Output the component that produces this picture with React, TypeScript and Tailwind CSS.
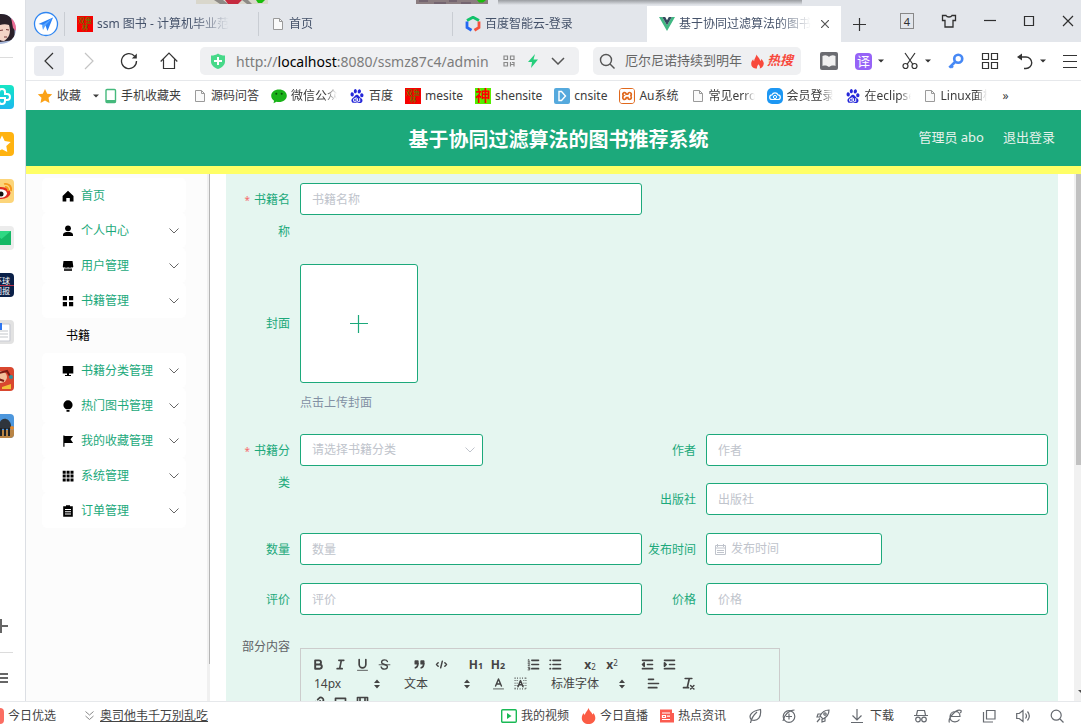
import React from "react";
import type { ReactNode } from "react";
import { SiBaidu, SiXampp } from "react-icons/si";

const FADE = "[mask-image:linear-gradient(to_right,black_75%,transparent)]";

function Svg({ box = "0 0 18 18", className = "size-[18px]", children }: { box?: string; className?: string; children: ReactNode }) {
  return (
    <svg viewBox={box} className={`shrink-0 ${className}`} fill="none" stroke="currentColor" strokeWidth="1.2" aria-hidden="true">
      {children}
    </svg>
  );
}

function Caret() {
  return (
    <Svg box="0 0 6 4" className="h-1 w-1.5">
      <path d="M0 0.5h6L3 3.5z" fill="currentColor" stroke="none" />
    </Svg>
  );
}

function PageIcon() {
  return (
    <Svg box="0 0 14 16" className="h-4 w-[14px] text-[#9a9a9a]">
      <path d="M2.500 2.500h6l3 3v8h-9z" fill="#fafafa" strokeWidth="1" />
      <path d="M8.500 2.500v3h3" strokeWidth="1" />
    </Svg>
  );
}

function FishIcon() {
  return (
    <span className="flex size-4 shrink-0 flex-col items-center justify-center bg-[#f80000] text-[7px] leading-[7px] text-[#4f8a00]">
      <span>双鱼</span>
      <span>林</span>
    </span>
  );
}

function WechatIcon() {
  return (
    <Svg box="0 0 16 16" className="size-4">
      <path d="M8 1.500c4.400 0 7.800 2.700 7.800 6.200S12.400 14 8 14c-.9 0-1.700-.1-2.500-.3L2.500 15.300l.6-2.600C1.300 11.500.2 9.700.2 7.700.2 4.200 3.600 1.500 8 1.500z" fill="#1ab31a" stroke="none" />
      <circle cx="5.300" cy="5.800" r="1" fill="#0a4d0a" stroke="none" />
      <circle cx="10.700" cy="5.800" r="1" fill="#0a4d0a" stroke="none" />
    </Svg>
  );
}

function Flame({ className }: { className: string }) {
  return (
    <Svg box="0 0 16 16" className={className}>
      <path
        d="M7 0.500c.6 2.500 3.800 4 3.900 7 .7-.5 1-1.300 1-2.300C14 7 15 9 14.600 11c-.4 2.300-2 4-4.300 4.500.7-1.500.2-3.100-1.500-4.500-.2 1.400-1.800 2.200-1.300 4.500H6C3 15 1.200 13 1.300 10.400c0-2 .9-3.200 2.100-4.700.1 1 .4 1.600 1 2C4.300 5 6.400 3.500 7 .5z"
        fill="currentColor"
        stroke="none"
      />
    </Svg>
  );
}

function VueIcon() {
  return (
    <Svg box="0 0 16 16" className="size-4">
      <path d="M0 1h3.200L8 9.300 12.800 1H16L8 15z" fill="#41b883" stroke="none" />
      <path d="M3.200 1h3L8 4.200 9.800 1h3L8 9.300z" fill="#35495e" stroke="none" />
    </Svg>
  );
}

function CloudLogo() {
  return (
    <Svg box="0 0 16 16" className="size-4">
      <path d="M2 4.500L8 1.200l6 3.300" stroke="#12c26b" strokeWidth="2.800" />
      <path d="M2 5.500v6l4.500 2.800" stroke="#2468f2" strokeWidth="2.800" />
      <path d="M14 5.500v6l-4.500 2.800" stroke="#f6513b" strokeWidth="2.800" />
    </Svg>
  );
}

/* ---------- left dock ---------- */

function DockTile({ className, children }: { className: string; children: ReactNode }) {
  return (
    <button type="button" className={`-ml-[10px] size-6 shrink-0 overflow-hidden rounded ${className}`}>
      {children}
    </button>
  );
}

function Dock() {
  return (
    <nav aria-label="快捷栏" className="flex w-[26px] shrink-0 flex-col overflow-hidden border-r border-[#dcdfe4] bg-white">
      <button type="button" aria-label="头像" className="mt-[14px] -ml-[14px] size-[30px] shrink-0 overflow-hidden rounded-full">
        <Svg box="0 0 30 30" className="size-[30px]">
          <rect width="30" height="30" fill="#a9b9da" stroke="none" />
          <path d="M4 0h17c6 5 9 13 7 26L6 29z" fill="#2a2029" stroke="none" />
          <path d="M25 3l5 4v10l-3-3z" fill="#ec6d95" stroke="none" />
          <path d="M9 14c3-3 9-5 14-3 2 6 1 12-5 16-6 0-9-6-9-13z" fill="#f3d3c6" stroke="none" />
          <path d="M14 16.500l3-.5M20 15.500l3 .5M18 23h3" stroke="#7a3b3b" />
        </Svg>
      </button>
      <div className="mt-[13px] h-px w-[13px] shrink-0 bg-[#dcdcdc]" />
      <div className="mt-[27px] flex flex-col gap-[23px]">
        <DockTile className="bg-gradient-to-b from-[#18e6c4] to-[#1fb8ee] text-white">
          <Svg box="0 0 24 24" className="size-6">
            <path d="M9 13V7a3 3 0 016 0v2h2a3 3 0 010 6h-3M10 13h5v3a3 3 0 01-6 0" strokeWidth="2" />
          </Svg>
        </DockTile>
        <DockTile className="bg-[#ffb310]">
          <Svg box="0 0 24 24" className="size-6">
            <path d="M12 3.500l2.700 5.500 6 .9-4.400 4.200 1 6-5.300-2.800-5.300 2.800 1-6L3.300 9.900l6-.9z" fill="#fff" stroke="none" />
          </Svg>
        </DockTile>
        <DockTile className="bg-[#fcd57a]">
          <Svg box="0 0 24 24" className="size-6">
            <ellipse cx="11" cy="14" rx="9.500" ry="6" fill="#e02b20" stroke="none" />
            <ellipse cx="10.500" cy="14.500" rx="6.500" ry="4.200" fill="#fff" stroke="none" />
            <circle cx="11" cy="15" r="2.500" fill="#111" stroke="none" />
            <path d="M14 5c4-1 8 2 7 7M15 8c2 0 3.500 1 3 4" stroke="#f59a1c" strokeWidth="1.800" />
          </Svg>
        </DockTile>
        <DockTile className="bg-[#ececec]">
          <Svg box="0 0 24 24" className="size-6">
            <rect x="2" y="5" width="19" height="14" fill="#16b866" stroke="none" />
            <path d="M2 5l9.500 8L21 5z" fill="#2fd884" stroke="none" />
          </Svg>
        </DockTile>
        <DockTile className="bg-[#0a2048] text-right text-[8px] leading-[9px] text-white">
          <span className="block pr-1">环球</span>
          <span className="block border-t border-[#b5314a] pr-1">国报</span>
        </DockTile>
        <DockTile className="bg-[#e2e2e2]">
          <Svg box="0 0 24 24" className="size-6">
            <rect x="4" y="4" width="16" height="17" rx="1" fill="#fff" stroke="#c9ccd3" />
            <path d="M8 11h10M8 14h10M8 17h10" stroke="#c4c7cc" />
            <rect x="4" y="3" width="8" height="7" fill="#2f76f0" stroke="none" />
          </Svg>
        </DockTile>
        <DockTile className="bg-[#d9472f]">
          <Svg box="0 0 24 24" className="size-6">
            <circle cx="11" cy="10" r="6" fill="#f3c09a" stroke="none" />
            <path d="M5 7l12-3 3 5M8 12l6 2" stroke="#7c1c14" strokeWidth="2" />
            <path d="M12 20l9-3v5h-9z" fill="#f2c037" stroke="none" />
            <circle cx="21" cy="10" r="2" fill="#2f8f9d" stroke="none" />
          </Svg>
        </DockTile>
        <DockTile className="bg-[#4d97dd]">
          <Svg box="0 0 24 24" className="size-6">
            <path d="M0 16h24v8H0z" fill="#b98445" stroke="none" />
            <path d="M9 12c0-9 10-10 12-1v4H9z" fill="#2f353c" stroke="none" />
            <path d="M11 14v8M15 14v8M19 14v8" stroke="#1e2226" strokeWidth="2" />
            <circle cx="22" cy="14" r="2" fill="#e88a2a" stroke="none" />
          </Svg>
        </DockTile>
      </div>
      <div className="mt-auto flex flex-col text-[#666]">
        <button type="button" aria-label="添加">
          <Svg box="0 0 8 14" className="h-[14px] w-2">
            <path d="M1 0v14M0 7h8" strokeWidth="2" />
          </Svg>
        </button>
        <div className="mt-[19px] mb-[20px] h-px w-[13px] bg-[#dcdcdc]" />
        <button type="button" aria-label="菜单" className="mb-[18px]">
          <Svg box="0 0 8 10" className="h-[10px] w-2">
            <path d="M0 1h8M0 5h8M0 9h8" strokeWidth="2" />
          </Svg>
        </button>
      </div>
    </nav>
  );
}

/* ---------- browser chrome ---------- */

function Tab({ icon, title, active, divided }: { icon: ReactNode; title: string; active?: boolean; divided?: boolean }) {
  return (
    <div className={`flex w-[194px] min-w-0 items-center ${active ? "bg-white" : ""}`}>
      <button type="button" className="flex h-full min-w-0 flex-1 items-center gap-1 pl-3 text-left">
        {icon}
        <span className={`w-[132px] min-w-0 overflow-hidden whitespace-nowrap ${FADE}`}>{title}</span>
      </button>
      {active && (
        <button type="button" aria-label="关闭标签" className="mr-3 text-[#555]">
          <Svg box="0 0 8 8" className="size-2">
            <path d="M0 0l8 8M8 0l-8 8" />
          </Svg>
        </button>
      )}
      {divided && <span className="h-6 w-px shrink-0 bg-[#c9cdd3]" />}
    </div>
  );
}

function TabStrip() {
  return (
    <div className="relative flex h-[42px] shrink-0 bg-[#e3e6eb] pt-1.5 text-xs text-[#45526a]">
      <div className="absolute top-0 left-[170px] h-1 w-[72px] bg-[#d9d7cc]">
        <Svg box="0 0 72 4" className="h-1 w-[72px]">
          <path d="M18 0l6 4h8l-5-4zM46 0h6l4 4h-5z" fill="#8d8a86" stroke="none" />
          <path d="M29 0h17l-4 4H32z" fill="#c52a3f" stroke="none" />
          <path d="M60 0h9l-3 3h-4z" fill="#19bd0b" stroke="none" />
        </Svg>
      </div>
      <div className="absolute top-0 left-[390px] h-1 w-[72px] bg-[#8b7d80]">
        <Svg box="0 0 72 4" className="h-1 w-[72px]">
          <path d="M3 1h9M18 3h12M33 1h8M45 3h10" stroke="#6d5d6b" strokeWidth="1.500" />
          <path d="M61 0h9l-3 2.500h-4z" fill="#19bd0b" stroke="none" />
        </Svg>
      </div>
      <div className="absolute top-0 left-[472px] h-[5px] w-[304px] bg-gradient-to-b from-[#9a9da1] to-[#e3e6eb]" />

      <button type="button" aria-label="浏览器" className="ml-1.5 flex w-7 shrink-0 items-center justify-center">
        <Svg box="0 0 26 26" className="size-[26px]">
          <circle cx="13" cy="13" r="11.500" fill="#fff" stroke="#2f86f2" strokeWidth="1.300" />
          <path d="M5.500 13L20 6.500 14.500 20 12.500 14.500z" fill="#2b82f6" stroke="none" />
          <path d="M20 6.500L9 14.500l1 4.500 2.500-4.500z" fill="#5ba6ff" stroke="none" />
        </Svg>
      </button>
      <span className="ml-1 h-6 w-px shrink-0 self-center bg-[#c9cdd3]" />
      <Tab icon={<FishIcon />} title="ssm 图书 - 计算机毕业范文" divided />
      <Tab icon={<PageIcon />} title="首页" divided />
      <Tab icon={<CloudLogo />} title="百度智能云-登录" />
      <Tab icon={<VueIcon />} title="基于协同过滤算法的图书推荐" active />
      <button type="button" aria-label="新标签" className="ml-2.5 flex w-4 shrink-0 items-center justify-center text-[#333]">
        <Svg box="0 0 14 14" className="size-[14px]">
          <path d="M7.500 1v13M1 7.500h13" />
        </Svg>
      </button>
      <div className="mr-[7px] ml-auto flex shrink-0 items-center gap-[27px] pb-1.5 text-[#2f2f2f]">
        <button type="button" className="flex h-4 w-[14px] items-center justify-center border border-[#888] text-[11px] leading-none">4</button>
        <button type="button" aria-label="皮肤">
          <Svg box="0 0 16 14" className="h-[14px] w-4">
            <path d="M5 1.500H1.500v5H4V13h8V6.500h2.500v-5H11C10 3.500 6 3.500 5 1.500z" strokeWidth="1.300" />
          </Svg>
        </button>
        <button type="button" aria-label="最小化">
          <Svg box="0 0 12 12" className="size-3">
            <path d="M0 5.500h12" />
          </Svg>
        </button>
        <button type="button" aria-label="最大化">
          <Svg box="0 0 12 12" className="size-3">
            <path d="M1.500 1.500h9v9h-9z" />
          </Svg>
        </button>
        <button type="button" aria-label="关闭">
          <Svg box="0 0 12 12" className="size-3">
            <path d="M1 1l10 10M11 1L1 11" />
          </Svg>
        </button>
      </div>
    </div>
  );
}

function AddressBar() {
  return (
    <div className="flex h-[39px] shrink-0 items-center border-b border-[#e6e8eb] bg-white pr-1 pl-2 text-[#333]">
      <div className="flex gap-2.5">
        <button type="button" aria-label="后退" className="flex size-[30px] items-center justify-center rounded-sm bg-[#e9ebf0]">
          <Svg><path d="M13 1L5 9l8 8" /></Svg>
        </button>
        <button type="button" aria-label="前进" className="flex size-[30px] items-center justify-center text-[#c4c4c4]">
          <Svg><path d="M5 1l8 8-8 8" /></Svg>
        </button>
        <button type="button" aria-label="刷新" className="flex size-[30px] items-center justify-center">
          <Svg>
            <path d="M16.500 9A7.500 7.500 0 1114.500 4" strokeWidth="1.300" />
            <path d="M16.800 1.500v5h-5z" fill="currentColor" stroke="none" />
          </Svg>
        </button>
        <button type="button" aria-label="主页" className="flex size-[30px] items-center justify-center">
          <Svg><path d="M.7 9.500L9 1.200 17.300 9.500M3.500 7.500v9h11v-9" strokeWidth="1.200" /></Svg>
        </button>
      </div>
      <div className="ml-4 flex h-7 min-w-0 flex-1 items-center rounded-[5px] bg-[#eff0f2] pr-[14px] pl-2.5">
        <Svg box="0 0 16 16" className="size-4">
          <path d="M1 2.500c3 0 5-.5 7-2 2 1.500 4 2 7 2v6c0 3.500-3 6-7 7.500-4-1.500-7-4-7-7.500z" fill="#47d989" stroke="none" />
          <path d="M8 4v8M4 8h8" stroke="#fff" strokeWidth="2" />
        </Svg>
        <span className="ml-2.5 min-w-0 flex-1 overflow-hidden text-[14px] whitespace-nowrap text-[#7c7c7c]">
          http://<span className="text-black">localhost</span>:8080/ssmz87c4/admin
        </span>
        <div className="ml-3 flex items-center gap-[13px]">
          <Svg box="0 0 12 12" className="size-3 text-[#8a8a8a]">
            <path d="M1 1h3.500v3.500H1zM7.500 1H11v3.500H7.500zM1 7.500h3.500V11H1zM7.500 7v4.500M11 7v4.500M9 7.500h2M8 9.500h3" />
          </Svg>
          <Svg box="0 0 10 14" className="h-[14px] w-2.5">
            <path d="M7 0L0 8h4L3 14l7-8.500H5.500z" fill="#25ce7b" stroke="none" />
          </Svg>
          <Svg box="0 0 14 8" className="h-2 w-[14px] text-[#555]">
            <path d="M1 1l6 6 6-6" strokeWidth="1.500" />
          </Svg>
        </div>
      </div>
      <label className="ml-[14px] flex h-7 w-52 items-center rounded-[5px] bg-[#eff0f2] pr-2 pl-1.5">
        <Svg box="0 0 16 16" className="size-4 text-[#555]">
          <circle cx="7" cy="7" r="5.500" strokeWidth="1.400" />
          <path d="M11 11l4.500 4.500" strokeWidth="1.400" />
        </Svg>
        <input aria-label="搜索" defaultValue="厄尔尼诺持续到明年" className="ml-2.5 min-w-0 flex-1 bg-transparent text-[13px] text-[#666] outline-none" />
        <Flame className="ml-1 size-[15px] text-[#f8493c]" />
        <b className="ml-0.5 text-[13px] text-[#f8493c] italic">热搜</b>
      </label>
      <div className="ml-[19px] flex items-center gap-[17px]">
        <button type="button" aria-label="阅读">
          <Svg>
            <rect width="18" height="18" rx="2" fill="#6b6c71" stroke="none" />
            <path d="M2.500 4c3-1.500 5-.5 6.500 1 1.500-1.500 3.500-2.500 6.500-1v10c-3-1-5 0-6.500 1-1.500-1-3.500-2-6.500-1z" fill="#f1f1f1" stroke="none" />
          </Svg>
        </button>
        <button type="button" className="flex items-center gap-1.5">
          <span className="flex size-[17px] items-center justify-center rounded-sm bg-[#9663f7] text-[13px] leading-none text-white">译</span>
          <Caret />
        </button>
        <button type="button" aria-label="截图" className="flex items-center gap-1.5">
          <Svg>
            <path d="M4 1l8 11.500M14 1L6 12.500" strokeWidth="1.200" />
            <circle cx="4.500" cy="14" r="2.500" strokeWidth="1.200" />
            <circle cx="13.500" cy="14" r="2.500" strokeWidth="1.200" />
          </Svg>
          <Caret />
        </button>
        <button type="button" aria-label="密码" className="text-[#4688f5]">
          <Svg className="size-4">
            <circle cx="11.500" cy="6.500" r="4.500" strokeWidth="3" />
            <path d="M8.500 9.500L1.500 16.500M3 14l2.500 2.500" strokeWidth="3" />
          </Svg>
        </button>
        <button type="button" aria-label="应用">
          <Svg><path d="M1.500 1.500h6v6h-6zM10.500 1.500h6v6h-6zM1.500 10.500h6v6h-6zM10.500 10.500h6v6h-6z" /></Svg>
        </button>
        <button type="button" aria-label="撤销" className="flex items-center gap-1.5">
          <Svg>
            <path d="M4 5h6a5.500 5.500 0 010 11.500H8" strokeWidth="1.400" />
            <path d="M1 5l5-3.500v7z" fill="currentColor" stroke="none" />
          </Svg>
          <Caret />
        </button>
        <button type="button" aria-label="菜单">
          <Svg box="0 0 14 14" className="size-[14px]"><path d="M0 1.500h14M0 7.500h14M0 13.500h14" strokeWidth="1" /></Svg>
        </button>
      </div>
    </div>
  );
}

function Bookmark({ icon, label, clipped }: { icon: ReactNode; label: string; clipped?: boolean }) {
  return (
    <a href="#" className="flex shrink-0 items-center gap-1 whitespace-nowrap">
      {icon}
      <span className={clipped ? `max-w-[46px] overflow-hidden ${FADE}` : ""}>{label}</span>
    </a>
  );
}

function Bookmarks() {
  return (
    <div className="flex h-[29px] shrink-0 items-center gap-3 overflow-hidden bg-white pl-[11px] text-xs text-[#3c3c3c]">
      <div className="-mr-1.5 flex shrink-0 items-center gap-3">
        <Bookmark
          icon={
            <Svg box="0 0 16 16" className="size-4">
              <path d="M8 1l2.200 4.700 5 .6-3.700 3.500 1 5.100L8 12.400l-4.500 2.500 1-5.100L.8 6.300l5-.6z" fill="#fba218" stroke="none" />
            </Svg>
          }
          label="收藏"
        />
        <button type="button" aria-label="更多收藏"><Caret /></button>
      </div>
      <Bookmark
        icon={
          <Svg box="0 0 12 16" className="h-4 w-3">
            <rect x="1" y="1.500" width="9.500" height="13" rx="1" fill="#fff" stroke="#45b97c" strokeWidth="1.400" />
            <path d="M1 12h9.500v2.500H1z" fill="#45b97c" stroke="none" />
          </Svg>
        }
        label="手机收藏夹"
      />
      <Bookmark icon={<PageIcon />} label="源码问答" />
      <Bookmark icon={<WechatIcon />} label="微信公众号" clipped />
      <Bookmark icon={<SiBaidu className="size-4 shrink-0 p-px text-[#2527d9]" />} label="百度" />
      <Bookmark icon={<FishIcon />} label="mesite" />
      <Bookmark
        icon={<span className="flex size-4 shrink-0 items-center justify-center bg-[#52ec00] text-[15px] leading-none font-bold text-[#f00]">神</span>}
        label="shensite"
      />
      <Bookmark
        icon={
          <Svg box="0 0 16 16" className="size-4">
            <rect width="16" height="16" rx="2" fill="#55a9dd" stroke="none" />
            <path d="M5 3.500h2.500L11.500 8l-4 4.500H5z" fill="#55a9dd" stroke="#fff" strokeWidth="1.400" />
          </Svg>
        }
        label="cnsite"
      />
      <Bookmark
        icon={<span className="flex size-4 shrink-0 items-center justify-center rounded-sm bg-[#e0681c]"><SiXampp className="size-[14px] text-white" /></span>}
        label="Au系统"
      />
      <Bookmark icon={<PageIcon />} label="常见error" clipped />
      <Bookmark
        icon={
          <Svg box="0 0 16 16" className="size-4">
            <rect width="16" height="16" rx="5" fill="#1d97f3" stroke="none" />
            <path d="M5 11.500a2.300 2.300 0 010-4.600 3.200 3.200 0 016 0 2.300 2.300 0 010 4.600z" stroke="#fff" />
            <circle cx="8" cy="9" r="1.600" stroke="#fff" strokeWidth="1" />
          </Svg>
        }
        label="会员登录中"
        clipped
      />
      <Bookmark icon={<SiBaidu className="size-4 shrink-0 p-px text-[#2527d9]" />} label="在eclipse" clipped />
      <Bookmark icon={<PageIcon />} label="Linux面板" clipped />
      <button type="button" aria-label="更多" className="ml-1">»</button>
    </div>
  );
}

/* ---------- application ---------- */

function AppHeader() {
  return (
    <header className="relative flex h-16 shrink-0 items-center justify-center border-b-8 border-[#ffff66] bg-[#1ca97b] pl-2.5 text-white">
      <h1 className="pt-1 text-xl leading-7 font-bold">基于协同过滤算法的图书推荐系统</h1>
      <div className="absolute inset-y-0 right-[26px] flex items-center gap-[19px] text-[13px] text-[#e6f2ec]">
        <span>管理员 abo</span>
        <button type="button">退出登录</button>
      </div>
    </header>
  );
}

function Chevron({ className }: { className: string }) {
  return (
    <Svg box="0 0 10 6" className={`h-1.5 w-2.5 ${className}`}>
      <path d="M.5.5L5 5 9.500.5" strokeWidth="1" />
    </Svg>
  );
}

const MENU: { label: string; icon: ReactNode; child?: string }[] = [
  { label: "首页", icon: <path d="M6 .8L11.500 6v5.500h-3.700V8H4.300v3.500H.600V6z" /> },
  { label: "个人中心", icon: <><circle cx="6" cy="3.300" r="2.900" /><path d="M1 11V9.200C1.500 7.500 3.500 7 6 7s4.500.5 5 2.200V11z" /></> },
  { label: "用户管理", icon: <><path d="M1.500 1h9l.8 5.500c0 1-1.500 1.500-2 .7-.5.800-2 .8-3.300 0-1 .8-2.600.8-3.200 0-.6.800-2 .3-2-.7z" /><path d="M2 8.500h8V11H2z" opacity=".8" /></> },
  { label: "书籍管理", icon: <path d="M.800 1h4.200v4.200H.8zM7 1h4.200v4.200H7zM.800 7H5v4.200H.8zM7 7h4.200v4.200H7z" />, child: "书籍" },
  { label: "书籍分类管理", icon: <path d="M.7 1h10.600v7.500H.7zM5 8.500h2V10h2v1H3v-1h2z" /> },
  { label: "热门图书管理", icon: <path d="M6 .3a4.600 4.600 0 014.600 4.600C10.600 7 9 8.500 7.500 9.300h-3C3 8.500 1.400 7 1.400 4.900A4.600 4.600 0 016 .3zM4.500 10h3v1.700h-3z" /> },
  { label: "我的收藏管理", icon: <path d="M1.300.5h1.200V1h8.600L8.500 4.300 11.100 8H2.500v3.700H1.300z" /> },
  { label: "系统管理", icon: <path d="M.7.8h3v3h-3zM4.600.8h3v3h-3zM8.500.8h3v3h-3zM.7 4.600h3v3h-3zM4.600 4.600h3v3h-3zM8.500 4.600h3v3h-3zM.7 8.400h3v3h-3zM4.600 8.400h3v3h-3zM8.500 8.400h3v3h-3z" /> },
  { label: "订单管理", icon: <path fillRule="evenodd" d="M1.200 1.300H4V.3h4v1h2.800v10.400H1.200zM3 4v1h6V4zM3 6.300v1h6v-1zM3 8.600v1h6v-1z" /> },
];

function Sidebar() {
  return (
    <aside className="flex w-[184px] shrink-0 bg-[#fcfcfc]">
      <ul className="flex-1 pt-1 pr-[21px] pl-4 text-xs">
        {MENU.map((item) => (
          <li key={item.label}>
            <button type="button" className="flex h-[35px] w-full items-center rounded-[5px] bg-white pr-[7px] pl-5">
              <svg viewBox="0 0 12 12" className="size-3 shrink-0 fill-black" aria-hidden="true">{item.icon}</svg>
              <span className="ml-[7px] flex-1 text-left text-[#1ca97b]">{item.label}</span>
              {item.label !== "首页" && <Chevron className="text-[#666]" />}
            </button>
            {item.child && (
              <a href="#" className="flex h-[35px] items-center pl-6 text-black">{item.child}</a>
            )}
          </li>
        ))}
      </ul>
      <div className="flex w-[3px] justify-end bg-[#f0f0f0]">
        <div className="h-[93%] w-px bg-[#b5b5b5]" />
      </div>
    </aside>
  );
}

const FIELD = "h-8 rounded-[3px] border border-[#1ca97b] bg-white text-xs text-[#606266] outline-none placeholder:text-[#c0c4cc]";

function Row({ id, label, required, children }: { id: string; label: string; required?: boolean; children: ReactNode }) {
  return (
    <div className="flex items-start">
      <label htmlFor={id} className="w-16 shrink-0 pt-px pr-2.5 text-right text-xs leading-8 text-[#1ca97b]">
        {required && <span className="mr-1 text-[10px] text-[#f56c6c]">*</span>}
        {label}
      </label>
      {children}
    </div>
  );
}

function TextRow({ id, label, required }: { id: string; label: string; required?: boolean }) {
  return (
    <Row id={id} label={label} required={required}>
      <input id={id} placeholder={label} className={`min-w-0 flex-1 px-[11px] ${FIELD}`} />
    </Row>
  );
}

function Tool({ label, children }: { label: string; children: ReactNode }) {
  return (
    <button type="button" aria-label={label} className="flex h-[19px] w-[22px] items-center justify-center text-[#444]">
      {children}
    </button>
  );
}

function Ink({ children }: { children: ReactNode }) {
  return (
    <svg viewBox="0 0 18 18" className="size-[15px]" fill="none" stroke="currentColor" strokeWidth="2" strokeLinecap="round" strokeLinejoin="round" aria-hidden="true">
      {children}
    </svg>
  );
}

function Picker({ label, value, className }: { label: string; value: string; className: string }) {
  return (
    <div className={`relative flex h-[19px] items-center text-[#444] ${className}`}>
      <select aria-label={label} className="h-full w-full appearance-none bg-transparent pl-[7px] text-xs outline-none">
        <option>{value}</option>
      </select>
      <svg viewBox="0 0 6 10" className="pointer-events-none absolute right-1 h-2.5 w-1.5" aria-hidden="true">
        <path d="M0 4l3-3.500L6 4zM0 6h6L3 9.500z" fill="currentColor" />
      </svg>
    </div>
  );
}

function Editor() {
  return (
    <div className="mt-4 h-[300px] w-[480px] border border-[#ccc] px-1.5 pt-1.5">
      <div className="flex gap-[13px]">
        <div className="flex">
          <Tool label="加粗"><Ink><path d="M5 4h4.500a2.500 2.500 0 010 5H5zM5 9h5.500a2.500 2.500 0 010 5H5z" strokeWidth="2.300" /></Ink></Tool>
          <Tool label="斜体"><Ink><path d="M7 4h6M5 14h6M8 14l2-10" /></Ink></Tool>
          <Tool label="下划线"><Ink><path d="M5 3v6a4 4 0 008 0V3" /><path d="M3 16h12" strokeWidth="1" /></Ink></Tool>
          <Tool label="删除线"><Ink><path d="M12.500 5.500C12 4 10.500 3.500 9 3.500c-2 0-3.500 1-3.500 2.700 0 3.300 7 2.300 7 5.600 0 1.700-1.500 2.700-3.500 2.700s-3.500-.8-4-2.500" strokeWidth="1.600" /><path d="M2.500 9.300h13" strokeWidth="1" /></Ink></Tool>
        </div>
        <div className="flex">
          <Tool label="引用"><Ink><path d="M4 5h3v3H4zM11 5h3v3h-3z" fill="currentColor" /><path d="M7 8c0 4-3 5-3 5M14 8c0 4-3 5-3 5" /></Ink></Tool>
          <Tool label="代码"><Ink><path d="M5 7L3 9l2 2M13 7l2 2-2 2M10 5L8 13" strokeWidth="1.800" /></Ink></Tool>
        </div>
        <div className="flex font-bold">
          <Tool label="标题1"><span className="text-[12px] leading-none">H<span className="text-[9px]">1</span></span></Tool>
          <Tool label="标题2"><span className="text-[12px] leading-none">H<span className="text-[9px]">2</span></span></Tool>
        </div>
        <div className="flex">
          <Tool label="有序列表"><Ink><path d="M7 4h8M7 9h8M7 14h8" /><path d="M2.500 3.500l1-.5v3M2.500 6h2M2.500 8h2l-2 2.500h2M2.500 12.500h2v3h-2M3 14h1.500" strokeWidth="1" /></Ink></Tool>
          <Tool label="无序列表"><Ink><path d="M6 4h9M6 9h9M6 14h9M2.500 4h.5M2.500 9h.5M2.500 14h.5" /></Ink></Tool>
        </div>
        <div className="flex font-bold">
          <Tool label="下标"><span className="flex text-[12px] leading-none">x<span className="self-end pt-1 text-[8px] leading-none font-normal">2</span></span></Tool>
          <Tool label="上标"><span className="flex text-[12px] leading-none">x<span className="text-[8px] leading-none font-normal">2</span></span></Tool>
        </div>
        <div className="flex">
          <Tool label="减少缩进"><Ink><path d="M3 14h12M3 4h12M9 9h6" /><path d="M5 7v4L3 9z" fill="currentColor" /></Ink></Tool>
          <Tool label="增加缩进"><Ink><path d="M3 14h12M3 4h12M9 9h6" /><path d="M3 7v4l2-2z" fill="currentColor" /></Ink></Tool>
        </div>
      </div>
      <div className="flex gap-[13px]">
        <Picker label="字号" value="14px" className="w-[77px]" />
        <Picker label="段落" value="文本" className="w-[77px]" />
        <div className="flex">
          <Tool label="文字颜色"><Ink><path d="M5.500 12L9 3.500l3.500 8.500M6.500 9.500h5" strokeWidth="1.700" /><path d="M3 15.500h12" strokeWidth="1" /></Ink></Tool>
          <Tool label="背景颜色">
            <Ink>
              <path d="M2.500 2v14M15.500 2v14M2 2.500h14M2 15.500h14M5 5v8M13 5v8" strokeWidth="1.500" strokeDasharray="1 2" strokeLinecap="butt" />
              <path d="M6 13l3-7.500 3 7.500M7 10.500h4" strokeWidth="1.800" />
            </Ink>
          </Tool>
        </div>
        <Picker label="字体" value="标准字体" className="w-[85px]" />
        <Tool label="对齐"><Ink><path d="M3 9h12M3 14h10M3 4h6" /></Ink></Tool>
        <Tool label="清除格式"><Ink><path d="M5 3h8M7.500 14L10 3M3 14h6" /><path d="M11.500 11.500l4 4M15.500 11.500l-4 4" strokeWidth="1.800" /></Ink></Tool>
      </div>
      <div className="flex">
        <Tool label="链接"><Ink><path d="M7 11l4-4M8 5.500L9.500 4a3 3 0 014.500 4l-1.500 2M5.500 8L4 9.500A3 3 0 008.500 14l1.500-1.500" /></Ink></Tool>
        <Tool label="图片"><Ink><path d="M3 4h12v10H3zM5 12l3-3 2 1.500L12 9l1 3" /></Ink></Tool>
        <Tool label="视频"><Ink><path d="M3 3h12v12H3zM6 3v12M12 3v12M6 9h6" /></Ink></Tool>
      </div>
    </div>
  );
}

function BookForm() {
  return (
    <main className="flex min-w-0 flex-1 overflow-hidden bg-white pl-4">
      <form className="flex h-max min-w-0 flex-1 flex-col gap-4 bg-[#e5f6f0] px-2.5 pt-[9px]">
        <div className="grid grid-cols-2">
          <TextRow id="name" label="书籍名称" required />
        </div>
        <div className="flex">
          <span className="w-16 shrink-0 pr-2.5 text-right text-xs leading-[119px] text-[#1ca97b]">封面</span>
          <div className="text-xs">
            <button type="button" aria-label="上传封面" className="flex h-[119px] w-[118px] items-center justify-center rounded-[3px] border border-[#1ca97b] bg-white text-[#1ca97b]">
              <Svg box="0 0 18 18" className="size-[18px]"><path d="M8.500 0v18M0 8.500h18" /></Svg>
            </button>
            <p className="pt-[5px] leading-[30px] text-[#8290a3]">点击上传封面</p>
          </div>
        </div>
        <div className="grid grid-cols-2">
          <Row id="category" label="书籍分类" required>
            <div className="relative flex w-[183px] items-center">
              <select id="category" className={`w-full appearance-none px-[11px] ${FIELD} text-[#c0c4cc]`}>
                <option>请选择书籍分类</option>
              </select>
              <Chevron className="pointer-events-none absolute right-2 text-[#c0c4cc]" />
            </div>
          </Row>
          <div className="flex flex-col gap-4">
            <TextRow id="author" label="作者" />
            <TextRow id="press" label="出版社" />
          </div>
        </div>
        <div className="grid grid-cols-2 gap-y-[17px] pt-px">
          <TextRow id="count" label="数量" />
          <Row id="date" label="发布时间">
            <div className={`flex w-[176px] items-center gap-1 px-[7px] ${FIELD}`}>
              <Svg box="0 0 13 13" className="size-[13px] text-[#c0c4cc]">
                <path d="M1.500 2.500h10v9h-10zM1.500 5h10M3.500 1v3M9.500 1v3M3 7.500h7M3 9.500h7" strokeWidth="1" />
              </Svg>
              <input id="date" placeholder="发布时间" className="min-w-0 flex-1 bg-transparent outline-none placeholder:text-[#c0c4cc]" />
            </div>
          </Row>
          <TextRow id="rating" label="评价" />
          <TextRow id="price" label="价格" />
        </div>
        <div className="flex">
          <span className="w-16 shrink-0 pr-2.5 text-right text-xs leading-[30px] text-[#606266]">部分内容</span>
          <Editor />
        </div>
      </form>
      <div className="ml-4 flex w-[7px] shrink-0 flex-col items-end justify-between bg-[#f1f1f1]">
        <div className="h-[291px] w-[5px] bg-[#c1c1c1]" />
        <svg viewBox="0 0 3 3" className="mb-2 size-[3px]" aria-hidden="true"><path d="M0 0h3v3z" fill="#505050" /></svg>
      </div>
    </main>
  );
}

/* ---------- bottom bar ---------- */

function BottomBar() {
  return (
    <footer className="flex h-6 shrink-0 items-center overflow-hidden border-t border-[#e6e8eb] bg-white pt-1 text-xs text-[#444]">
      <button type="button" className="flex shrink-0 items-center gap-1">
        <span className="h-4 w-1 rounded-r-full bg-[#fb6d62]" />
        今日优选
      </button>
      <div className="ml-[29px] flex shrink-0 items-center gap-1.5">
        <Svg box="0 0 9 9" className="size-[9px] text-[#888]"><path d="M.5.5l4 3.500 4-3.500M.5 5l4 3.500 4-3.500" strokeWidth="1" /></Svg>
        <a href="#" className="underline">奥司他韦千万别乱吃</a>
      </div>
      <div className="mr-[17px] ml-auto flex shrink-0 items-center gap-5 text-[#666a70]">
        <div className="mr-0.5 flex items-center gap-3 text-[#444]">
          <button type="button" className="flex items-center gap-1">
            <Svg box="0 0 16 14" className="h-[14px] w-4 text-[#19b955]">
              <rect x=".7" y=".7" width="14.600" height="12.600" rx="1" strokeWidth="1.400" />
              <path d="M6 4l4.500 3L6 10z" fill="currentColor" stroke="none" />
            </Svg>
            我的视频
          </button>
          <button type="button" className="flex items-center gap-1">
            <Svg box="0 0 14 16" className="h-4 w-[15px]">
              <path d="M7 0c1 3 3 4 4 6.500.6-.4.8-1 1-1.500 1 1.500 2 3.500 1.800 5.500C13.500 14 10.500 16 7 16S.500 14 .300 10.500C.200 8 1 6.500 2 5c.3 1 .7 1.500 1.300 1.700C4 4 6 3 7 0z" fill="#fb5c45" stroke="none" />
            </Svg>
            今日直播
          </button>
          <button type="button" className="flex items-center gap-1">
            <Svg box="0 0 14 14" className="size-[14px]">
              <path d="M0 .500h12V4h2v9.500H0z" fill="#fb5c50" stroke="none" />
              <path d="M2 4h8M2 10.500h8M2.500 6.500h3v2h-3zM7 7.200h3" stroke="#fff" />
            </Svg>
            热点资讯
          </button>
        </div>
        <button type="button" aria-label="清理"><Svg box="0 0 14 16" className="h-4 w-[14px]"><path d="M2.500 15c1-5 3-8 6.500-11M3.500 12C0 8 3 3 12.500 1.500 13.500 9 10 13.500 3.800 12" /></Svg></button>
        <button type="button" aria-label="加速"><Svg box="0 0 14 14" className="size-[14px]"><circle cx="7" cy="7.500" r="5.800" /><path d="M7 4.500v6M4 7.500h6M1 12C2 6 7 1 12.500 1" /></Svg></button>
        <button type="button" aria-label="火箭"><Svg box="0 0 14 14" className="size-[14px]"><path d="M13 1C9 1 6 3 4 7l3 3c4-2 6-5 6-9zM5 5H2L1 8h3M9 9v3l-3 1v-3M4 9.500L1 13" /><circle cx="9" cy="5" r="1.200" /></Svg></button>
        <button type="button" className="flex items-center gap-1.5">
          <Svg box="0 0 14 14" className="size-[14px]"><path d="M7 0v11M2.500 6.500L7 11l4.500-4.500M1 13.500h12" /></Svg>
          <span className="text-[#444]">下载</span>
        </button>
        <button type="button" aria-label="无痕"><Svg box="0 0 14 14" className="size-[14px]"><path d="M0 6.500h14M2.500 6L3.500 1.500h7l1 4.500" /><circle cx="4" cy="10.500" r="2.300" /><circle cx="10" cy="10.500" r="2.300" /></Svg></button>
        <button type="button" aria-label="兼容模式"><Svg box="0 0 14 14" className="size-[14px]"><path d="M2.500 7.500H12C12 4.500 10 2.500 7.300 2.500 4 2.500 2 5 2 8s2.200 4.800 5 4.800c2 0 3.500-.8 4.500-2.300M1.500 13.500C-.5 10 8-1 13 1.500c.5 1-.2 2-.8 2.700" /></Svg></button>
        <button type="button" aria-label="窗口"><Svg box="0 0 14 14" className="size-[14px]"><path d="M4.500 1.500h8.500V10H4.500zM1.500 3v10h9.500" /></Svg></button>
        <button type="button" aria-label="声音"><Svg box="0 0 14 14" className="size-[14px]"><path d="M.7 4.500h2.500L7 1.500v11l-3.800-3H.7zM9.500 4.500c1.200 1.500 1.200 3.500 0 5M11.500 2.500c2.200 2.700 2.200 6.300 0 9" /></Svg></button>
        <button type="button" aria-label="查找"><Svg box="0 0 14 14" className="size-[14px]"><circle cx="6.200" cy="6.200" r="5" /><path d="M10 10l3.500 3.500" /></Svg></button>
      </div>
    </footer>
  );
}

export default function App() {
  return (
    <div className="flex h-screen w-full flex-col overflow-hidden bg-white font-['Noto_Sans','Noto_Sans_CJK_SC',sans-serif]">
      <div className="flex min-h-0 flex-1">
        <Dock />
        <div className="flex min-w-0 flex-1 flex-col">
          <TabStrip />
          <AddressBar />
          <Bookmarks />
          <AppHeader />
          <div className="flex min-h-0 flex-1">
            <Sidebar />
            <BookForm />
          </div>
        </div>
      </div>
      <BottomBar />
    </div>
  );
}
